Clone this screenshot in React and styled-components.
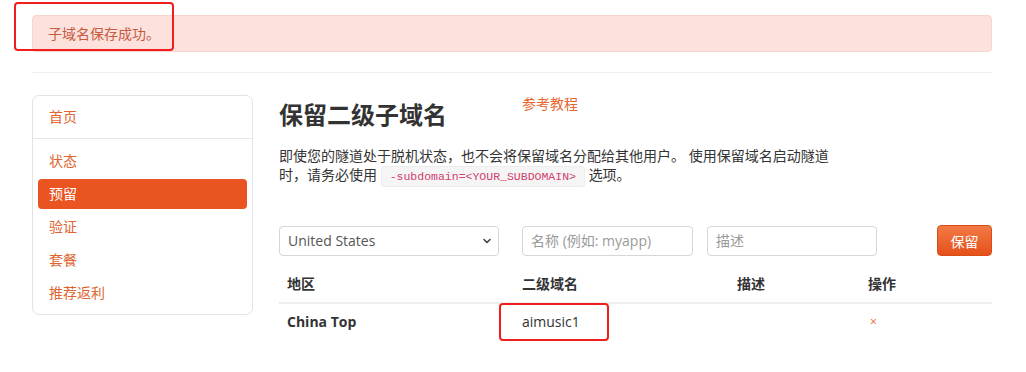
import React from 'react';
import styled, { createGlobalStyle } from 'styled-components';

const GlobalStyle = createGlobalStyle`
  html, body {
    margin: 0;
    padding: 0;
    background: #fff;
  }
  body {
    font-family: "Open Sans", "Noto Sans CJK SC", sans-serif;
    font-size: 14px;
    color: #333;
  }
  * {
    box-sizing: border-box;
  }
`;

const NAV_ITEMS = ['状态', '预留', '验证', '套餐', '推荐返利'];

const ChevronIcon = () => (
  <svg width="10" height="10" viewBox="0 0 10 10">
    <path d="M2 3.5 L5 6.5 L8 3.5" fill="none" stroke="#444" strokeWidth="1.6" strokeLinecap="round" strokeLinejoin="round" />
  </svg>
);

const App = () => {
  return (
    <Page>
      <GlobalStyle />
      <Alert>子域名保存成功。</Alert>
      <Divider />
      <Main>
        <Sidebar>
          <NavItem>首页</NavItem>
          <NavDivider />
          {NAV_ITEMS.map((label) => (
            <NavItem key={label} active={label === '预留'}>{label}</NavItem>
          ))}
        </Sidebar>
        <Content>
          <HeaderRow>
            <Title>保留二级子域名</Title>
            <TutorialLink>参考教程</TutorialLink>
          </HeaderRow>
          <Intro>
            即使您的隧道处于脱机状态，也不会将保留域名分配给其他用户。 使用保留域名启动隧道时，请务必使用{' '}
            <Code>-subdomain=&lt;YOUR_SUBDOMAIN&gt;</Code>{' '}
            选项。
          </Intro>
          <FormRow>
            <SelectWrap>
              <Select defaultValue="us">
                <option value="us">United States</option>
              </Select>
              <SelectArrow><ChevronIcon /></SelectArrow>
            </SelectWrap>
            <Input width={171} placeholder="名称 (例如: myapp)" />
            <Input width={170} placeholder="描述" />
            <SaveButton>保留</SaveButton>
          </FormRow>
          <Table>
            <thead>
              <tr>
                <Th width={235}>地区</Th>
                <Th width={215}>二级域名</Th>
                <Th width={131}>描述</Th>
                <Th>操作</Th>
              </tr>
            </thead>
            <tbody>
              <tr>
                <Td bold>China Top</Td>
                <Td>aimusic1</Td>
                <Td />
                <Td><RemoveLink>×</RemoveLink></Td>
              </tr>
            </tbody>
          </Table>
        </Content>
      </Main>
      <Marker top={2} left={14} width={160} height={49} />
      <Marker top={303} left={499} width={110} height={38} />
    </Page>
  );
};

export default App;

const Page = styled.div`
  position: relative;
  width: 1026px;
  height: 372px;
  padding: 15px 34px 0 32px;
  overflow: hidden;
`;

const Alert = styled.div`
  height: 37px;
  line-height: 35px;
  padding: 0 15px;
  background: #fde1dd;
  border: 1px solid #f9d4cf;
  border-radius: 4px;
  color: #c55a3c;
  font-size: 14px;
`;

const Divider = styled.div`
  margin-top: 20px;
  height: 1px;
  background: #eee;
`;

const Main = styled.div`
  display: flex;
  margin-top: 22px;
  gap: 26px;
`;

const Sidebar = styled.div`
  width: 221px;
  flex-shrink: 0;
  align-self: flex-start;
  padding: 6px 5px 6px;
  border: 1px solid #e2e2e2;
  border-radius: 7px;
`;

const NavItem = styled.div`
  height: 30px;
  line-height: 30px;
  padding-left: 11px;
  margin-top: 3px;
  border-radius: 4px;
  font-size: 14px;
  color: ${({ active }) => (active ? '#fff' : '#e0642e')};
  background: ${({ active }) => (active ? '#e95420' : 'transparent')};

  &:first-child {
    margin-top: 0;
  }
`;

const NavDivider = styled.div`
  height: 1px;
  margin: 6px -5px 7px;
  background: #e6e6e6;
`;

const Content = styled.div`
  flex: 1;
  min-width: 0;
`;

const HeaderRow = styled.div`
  display: flex;
  align-items: flex-start;
`;

const Title = styled.h2`
  width: 243px;
  margin: 5px 0 0;
  font-size: 24px;
  line-height: 30px;
  font-weight: 700;
  color: #333;
`;

const TutorialLink = styled.a`
  margin-top: -1px;
  line-height: 20px;
  font-size: 14px;
  color: #e8662f;
  cursor: pointer;
`;

const Intro = styled.p`
  width: 560px;
  margin: 16px 0 0;
  line-height: 19px;
  font-size: 14px;
  color: #333;
`;

const Code = styled.code`
  padding: 3px 8px;
  font-family: "Liberation Mono", "DejaVu Sans Mono", monospace;
  font-size: 11.5px;
  color: #d0406a;
  background: #f6f5f6;
  border: 1px solid #ececec;
  border-radius: 3px;
`;

const FormRow = styled.div`
  display: flex;
  align-items: center;
  margin-top: 39px;
`;

const SelectWrap = styled.div`
  position: relative;
  width: 220px;
  margin-right: 23px;
`;

const Select = styled.select`
  appearance: none;
  width: 100%;
  height: 30px;
  padding: 0 24px 0 8px;
  border: 1px solid #d6d6d6;
  border-radius: 4px;
  background: #fff;
  font-family: "Open Sans", sans-serif;
  font-size: 14px;
  color: #555;
`;

const SelectArrow = styled.span`
  position: absolute;
  right: 7px;
  top: 10px;
  display: flex;
  pointer-events: none;
`;

const Input = styled.input`
  width: ${({ width }) => width}px;
  height: 30px;
  margin-right: 14px;
  padding: 0 8px;
  border: 1px solid #d6d6d6;
  border-radius: 4px;
  font-family: "Open Sans", "Noto Sans CJK SC", sans-serif;
  font-size: 14px;
  color: #555;

  &::placeholder {
    color: #9a9a9a;
  }
`;

const SaveButton = styled.button`
  margin-left: auto;
  width: 55px;
  height: 31px;
  padding: 0;
  border: 1px solid #d94c16;
  border-radius: 4px;
  background: linear-gradient(#f37a45, #e5501b);
  color: #fff;
  font-family: "Noto Sans CJK SC", sans-serif;
  font-size: 14px;
`;

const Table = styled.table`
  width: 100%;
  margin-top: 10px;
  border-collapse: collapse;
`;

const Th = styled.th`
  width: ${({ width }) => (width ? `${width}px` : 'auto')};
  padding: 8px;
  line-height: 20px;
  text-align: left;
  font-size: 14px;
  font-weight: 700;
  color: #333;
  border-bottom: 2px solid #eee;
`;

const Td = styled.td`
  padding: 7px 8px;
  line-height: 20px;
  font-size: 14px;
  font-weight: ${({ bold }) => (bold ? 700 : 400)};
  color: #333;
`;

const RemoveLink = styled.a`
  display: inline-block;
  margin-left: 2px;
  font-size: 12px;
  color: #e0642e;
  cursor: pointer;
`;

const Marker = styled.div`
  position: absolute;
  top: ${({ top }) => top}px;
  left: ${({ left }) => left}px;
  width: ${({ width }) => width}px;
  height: ${({ height }) => height}px;
  border: 2px solid #f21d1d;
  border-radius: 4px;
  pointer-events: none;
`;
